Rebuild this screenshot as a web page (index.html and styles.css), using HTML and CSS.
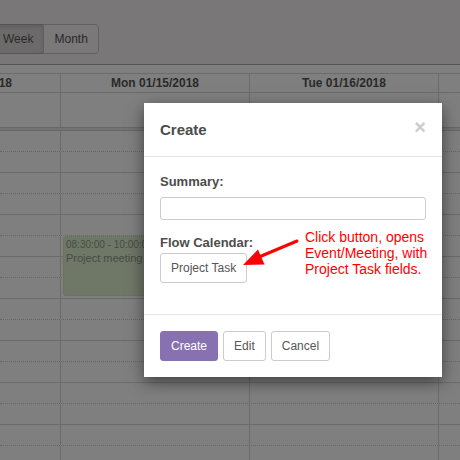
FILE: index.html
```html
<!DOCTYPE html>
<html>
<head>
<meta charset="utf-8">
<link rel="stylesheet" href="styles.css">
</head>
<body>
<div class="page">
  <div class="toolbar">
    <div class="btn-group">
      <button class="tb-btn active">Week</button>
      <button class="tb-btn">Month</button>
    </div>
  </div>
  <div class="calendar">
    <div class="row head">
      <div class="cell first"><span>Sun 01/14/2018</span></div>
      <div class="cell">Mon 01/15/2018</div>
      <div class="cell">Tue 01/16/2018</div>
      <div class="cell last"></div>
    </div>
    <div class="row allday">
      <div class="cell"></div><div class="cell"></div><div class="cell"></div><div class="cell last"></div>
    </div>
    <div class="divider"></div>
    <div class="slots">
      <div class="row slot dot"><div class="cell"></div><div class="cell"></div><div class="cell"></div><div class="cell last"></div></div>
      <div class="row slot"><div class="cell"></div><div class="cell"></div><div class="cell"></div><div class="cell last"></div></div>
      <div class="row slot dot"><div class="cell"></div><div class="cell"></div><div class="cell"></div><div class="cell last"></div></div>
      <div class="row slot"><div class="cell"></div><div class="cell"></div><div class="cell"></div><div class="cell last"></div></div>
      <div class="row slot dot"><div class="cell"></div><div class="cell"></div><div class="cell"></div><div class="cell last"></div></div>
      <div class="row slot"><div class="cell"></div><div class="cell"></div><div class="cell"></div><div class="cell last"></div></div>
      <div class="row slot dot"><div class="cell"></div><div class="cell"></div><div class="cell"></div><div class="cell last"></div></div>
      <div class="row slot"><div class="cell"></div><div class="cell"></div><div class="cell"></div><div class="cell last"></div></div>
      <div class="row slot dot"><div class="cell"></div><div class="cell"></div><div class="cell"></div><div class="cell last"></div></div>
      <div class="row slot"><div class="cell"></div><div class="cell"></div><div class="cell"></div><div class="cell last"></div></div>
      <div class="row slot dot"><div class="cell"></div><div class="cell"></div><div class="cell"></div><div class="cell last"></div></div>
      <div class="row slot"><div class="cell"></div><div class="cell"></div><div class="cell"></div><div class="cell last"></div></div>
      <div class="row slot dot"><div class="cell"></div><div class="cell"></div><div class="cell"></div><div class="cell last"></div></div>
      <div class="row slot"><div class="cell"></div><div class="cell"></div><div class="cell"></div><div class="cell last"></div></div>
      <div class="row slot dot"><div class="cell"></div><div class="cell"></div><div class="cell"></div><div class="cell last"></div></div>
      <div class="row slot"><div class="cell"></div><div class="cell"></div><div class="cell"></div><div class="cell last"></div></div>
      <div class="event">
        <div class="ev-time">08:30:00 - 10:00:00</div>
        <div class="ev-title">Project meeting</div>
      </div>
    </div>
  </div>

  <div class="backdrop"></div>

  <div class="modal">
    <div class="modal-header">
      <h4 class="modal-title">Create</h4>
      <span class="close">×</span>
    </div>
    <div class="modal-body">
      <label class="field-label">Summary:</label>
      <div class="input"></div>
      <label class="field-label">Flow Calendar:</label>
      <button class="btn">Project Task</button>
    </div>
    <div class="modal-footer">
      <button class="btn primary">Create</button>
      <button class="btn">Edit</button>
      <button class="btn">Cancel</button>
    </div>
  </div>

  <div class="note">Click button, opens<br>Event/Meeting, with<br>Project Task fields.</div>
  <svg class="arrow" width="460" height="460" viewBox="0 0 460 460">
    <line x1="297" y1="241" x2="259" y2="257" stroke="#ff0000" stroke-width="3" stroke-linecap="round"/>
    <polygon points="243,265 258,249.5 264.5,264.5" fill="#ff0000"/>
  </svg>
</div>
</body>
</html>
```
FILE: styles.css
```css
* { box-sizing: border-box; }
html, body { margin: 0; padding: 0; }
body {
  font-family: "Liberation Sans", Arial, sans-serif;
  background: #ffffff;
}
.page {
  position: relative;
  width: 460px;
  height: 460px;
  overflow: hidden;
  background: #ffffff;
}
.toolbar {
  height: 65px;
  padding-top: 24px;
  background: #f2eeee;
  border-bottom: 1px solid #a8a6a6;
}
.btn-group {
  display: flex;
  margin-left: -7px;
}
.tb-btn {
  height: 30px;
  padding: 0 10px;
  font-family: "Liberation Sans", Arial, sans-serif;
  font-size: 12px;
  color: #555;
  background: #f4f0f0;
  border: 1px solid #c2bebe;
  border-radius: 0 4px 4px 0;
  margin-left: -1px;
}
.tb-btn.active {
  background: #d9d5d5;
  border-color: #aaa6a6;
  border-radius: 4px 0 0 4px;
  box-shadow: inset 0 2px 4px rgba(0,0,0,0.12);
}
.calendar {
  margin-top: 8px;
}
.row {
  display: grid;
  grid-template-columns: 61px 189px 189px 1fr;
}
.cell {
  border-right: 1px solid #d6d6d6;
}
.cell.last { border-right: none; }
.head {
  height: 20px;
  border-top: 1px solid #d6d6d6;
  border-bottom: 1px solid #d6d6d6;
}
.head .cell {
  font-size: 12px;
  font-weight: bold;
  color: #555;
  line-height: 18px;
  text-align: center;
  white-space: nowrap;
  overflow: hidden;
}
.head .cell.first {
  display: flex;
  justify-content: flex-end;
  padding-right: 48px;
}
.allday {
  height: 34px;
}
.divider {
  height: 4px;
  background: #e6e6e6;
  border-top: 1px solid #cfcfcf;
  border-bottom: 1px solid #cfcfcf;
}
.slots {
  position: relative;
}
.slot {
  height: 21px;
  border-bottom: 1px solid #d6d6d6;
}
.slot.dot {
  border-bottom: 1px dotted #cfcfcf;
}
.event {
  position: absolute;
  left: 63px;
  top: 105px;
  width: 150px;
  height: 60px;
  padding: 1px 2px;
  background: #deefcf;
  border: 1px solid #d3e8c2;
  border-radius: 3px;
  white-space: nowrap;
  overflow: hidden;
  color: #8e9889;
}
.ev-time {
  font-size: 10px;
  line-height: 13px;
}
.ev-title {
  font-size: 11px;
  line-height: 15px;
}
.backdrop {
  position: absolute;
  inset: 0;
  background: rgba(0,0,0,0.5);
}
.modal {
  position: absolute;
  left: 144px;
  top: 103px;
  width: 298px;
  background: #ffffff;
  box-shadow: 0 5px 15px rgba(0,0,0,0.5);
  color: #4c4c4c;
}
.modal-header {
  display: flex;
  justify-content: space-between;
  align-items: flex-start;
  padding: 16px 16px 15px 16px;
  border-bottom: 1px solid #e5e5e5;
}
.modal-title {
  margin: 0;
  font-size: 15px;
  line-height: 22px;
  font-weight: bold;
  color: #4c4c4c;
}
.close {
  font-size: 20px;
  font-weight: bold;
  line-height: 16px;
  color: #cccccc;
  margin-right: 0;
}
.modal-body {
  padding: 16px 16px 31px 16px;
}
.field-label {
  display: block;
  font-size: 13px;
  font-weight: bold;
  line-height: 18px;
  margin-bottom: 6px;
  color: #4c4c4c;
}
.input {
  height: 23px;
  border: 1px solid #cccccc;
  border-radius: 3px;
  margin-bottom: 14px;
}
.input + .field-label { margin-bottom: 1px; }
.btn {
  height: 30px;
  padding: 0 10px;
  font-family: "Liberation Sans", Arial, sans-serif;
  font-size: 12px;
  color: #555;
  background: #ffffff;
  border: 1px solid #cccccc;
  border-radius: 3px;
}
.btn.primary {
  background: #8871b1;
  border-color: #8871b1;
  color: #ffffff;
}
.modal-footer {
  display: flex;
  gap: 5px;
  padding: 16px;
  border-top: 1px solid #e5e5e5;
}
.note {
  position: absolute;
  left: 305px;
  top: 229px;
  font-size: 14px;
  line-height: 16px;
  color: #ff0000;
  white-space: nowrap;
}
.arrow {
  position: absolute;
  left: 0;
  top: 0;
  pointer-events: none;
}
```
